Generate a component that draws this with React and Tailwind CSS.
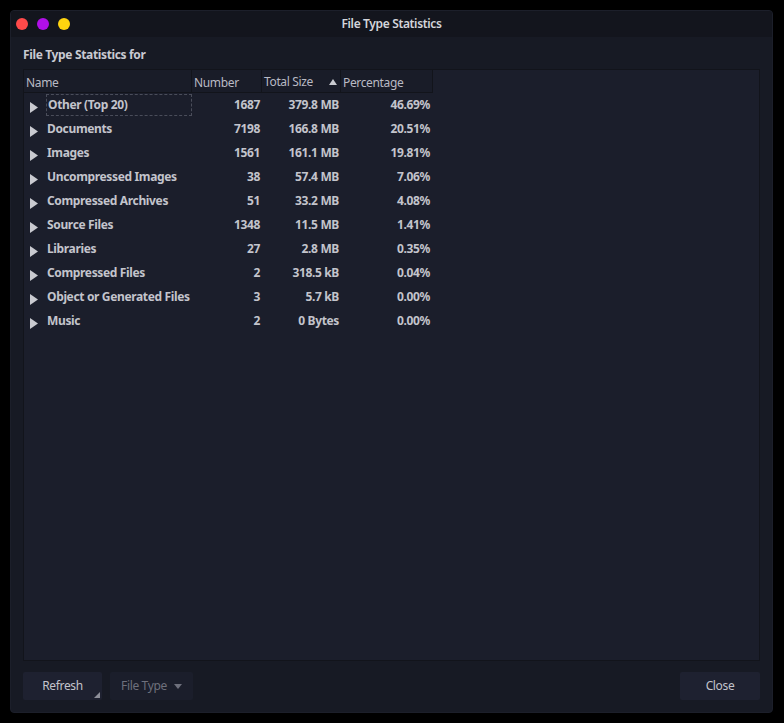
import React from 'react';

const rows = [
  ['Other (Top 20)', '1687', '379.8 MB', '46.69%'],
  ['Documents', '7198', '166.8 MB', '20.51%'],
  ['Images', '1561', '161.1 MB', '19.81%'],
  ['Uncompressed Images', '38', '57.4 MB', '7.06%'],
  ['Compressed Archives', '51', '33.2 MB', '4.08%'],
  ['Source Files', '1348', '11.5 MB', '1.41%'],
  ['Libraries', '27', '2.8 MB', '0.35%'],
  ['Compressed Files', '2', '318.5 kB', '0.04%'],
  ['Object or Generated Files', '3', '5.7 kB', '0.00%'],
  ['Music', '2', '0 Bytes', '0.00%'],
];

const Arrow = () => (
  <svg width="8" height="11" viewBox="0 0 8 11" className="shrink-0">
    <path d="M0 0 L8 5.5 L0 11 Z" fill="#c9cad0" />
  </svg>
);

export default function App() {
  return (
    <div className="w-[784px] h-[723px] bg-black p-[10px] pr-[11px] text-[12px] tracking-[-0.35px]" style={{ fontFamily: '"Noto Sans", "Open Sans", sans-serif' }}>
      <div className="w-full h-full rounded-[4px] bg-[#171a24] flex flex-col overflow-hidden border border-[#1c1f2a]">
        {/* title bar */}
        <div className="h-[26px] bg-[#13151d] flex items-center px-[5px] relative shrink-0">
          <div className="flex gap-[9px] items-center">
            <span className="w-[12px] h-[12px] rounded-full bg-[#ff4a4a]" />
            <span className="w-[12px] h-[12px] rounded-full bg-[#b10fe8]" />
            <span className="w-[12px] h-[12px] rounded-full bg-[#ffd40f]" />
          </div>
          <div className="absolute inset-0 flex items-center justify-center font-semibold text-[#d4d5db] text-[12px]">File Type Statistics</div>
        </div>

        <div className="flex-1 flex flex-col px-[12px] pt-[9px] pb-[12px] min-h-0">
          <div className="font-bold text-[#c9cad2] leading-[18px] h-[18px] mb-[5px]">File Type Statistics for</div>

          <div className="flex-1 bg-[#1b1e2b] border border-[#12141b] min-h-0 flex flex-col whitespace-nowrap">
            {/* header */}
            <div className="flex h-[23px] text-[#b9bac4] leading-[26px] shrink-0">
              <div className="w-[168px] pl-[2px] bg-[#191c28] border-r border-b border-[#12141b]">Name</div>
              <div className="w-[70px] pl-[2px] bg-[#191c28] border-r border-b border-[#12141b]">Number</div>
              <div className="w-[79px] pl-[2px] bg-[#191c28] border-r border-b border-[#12141b] flex items-center justify-between pr-[3px] pt-[1px]">
                <span className="leading-[22px]">Total Size</span>
                <svg width="8" height="6" viewBox="0 0 8 6"><path d="M0 6 L4 0 L8 6 Z" fill="#c9cad0" /></svg>
              </div>
              <div className="w-[92px] pl-[2px] bg-[#191c28] border-r border-b border-[#12141b]">Percentage</div>
            </div>

            {rows.map((r, i) => (
              <div key={r[0]} className="flex h-[24px] items-center font-bold text-[#c3c4cc]">
                <div className="w-[168px] flex items-center pl-[6px] h-full">
                  <div className="pt-[5px]"><Arrow /></div>
                  <div className={`ml-[8px] flex-1 h-[22px] flex items-center pl-[1px] ${i === 0 ? 'border border-dashed border-[#4a4d5a]' : ''}`}>
                    {r[0]}
                  </div>
                </div>
                <div className="w-[70px] text-right pr-[2px]">{r[1]}</div>
                <div className="w-[79px] text-right pr-[2px]">{r[2]}</div>
                <div className="w-[92px] text-right pr-[3px]">{r[3]}</div>
              </div>
            ))}
          </div>

          <div className="flex items-center mt-[11px] h-[28px] shrink-0">
            <button className="relative w-[79px] h-[28px] bg-[#1e2130] text-[#c3c4cc] rounded-[2px]">
              Refresh
              <svg className="absolute right-[2px] bottom-[2px]" width="6" height="6" viewBox="0 0 6 6"><path d="M6 0 L6 6 L0 6 Z" fill="#8d8f99" /></svg>
            </button>
            <button className="ml-[8px] w-[83px] h-[28px] bg-[#1b1e2b] text-[#6e707c] rounded-[2px] flex items-center justify-center gap-[7px]">
              <span>File Type</span>
              <svg width="8" height="5" viewBox="0 0 8 5"><path d="M0 0 L8 0 L4 5 Z" fill="#6e707c" /></svg>
            </button>
            <div className="flex-1" />
            <button className="w-[80px] h-[28px] bg-[#1e2130] text-[#c3c4cc] rounded-[2px]">Close</button>
          </div>
        </div>
      </div>
    </div>
  );
}
